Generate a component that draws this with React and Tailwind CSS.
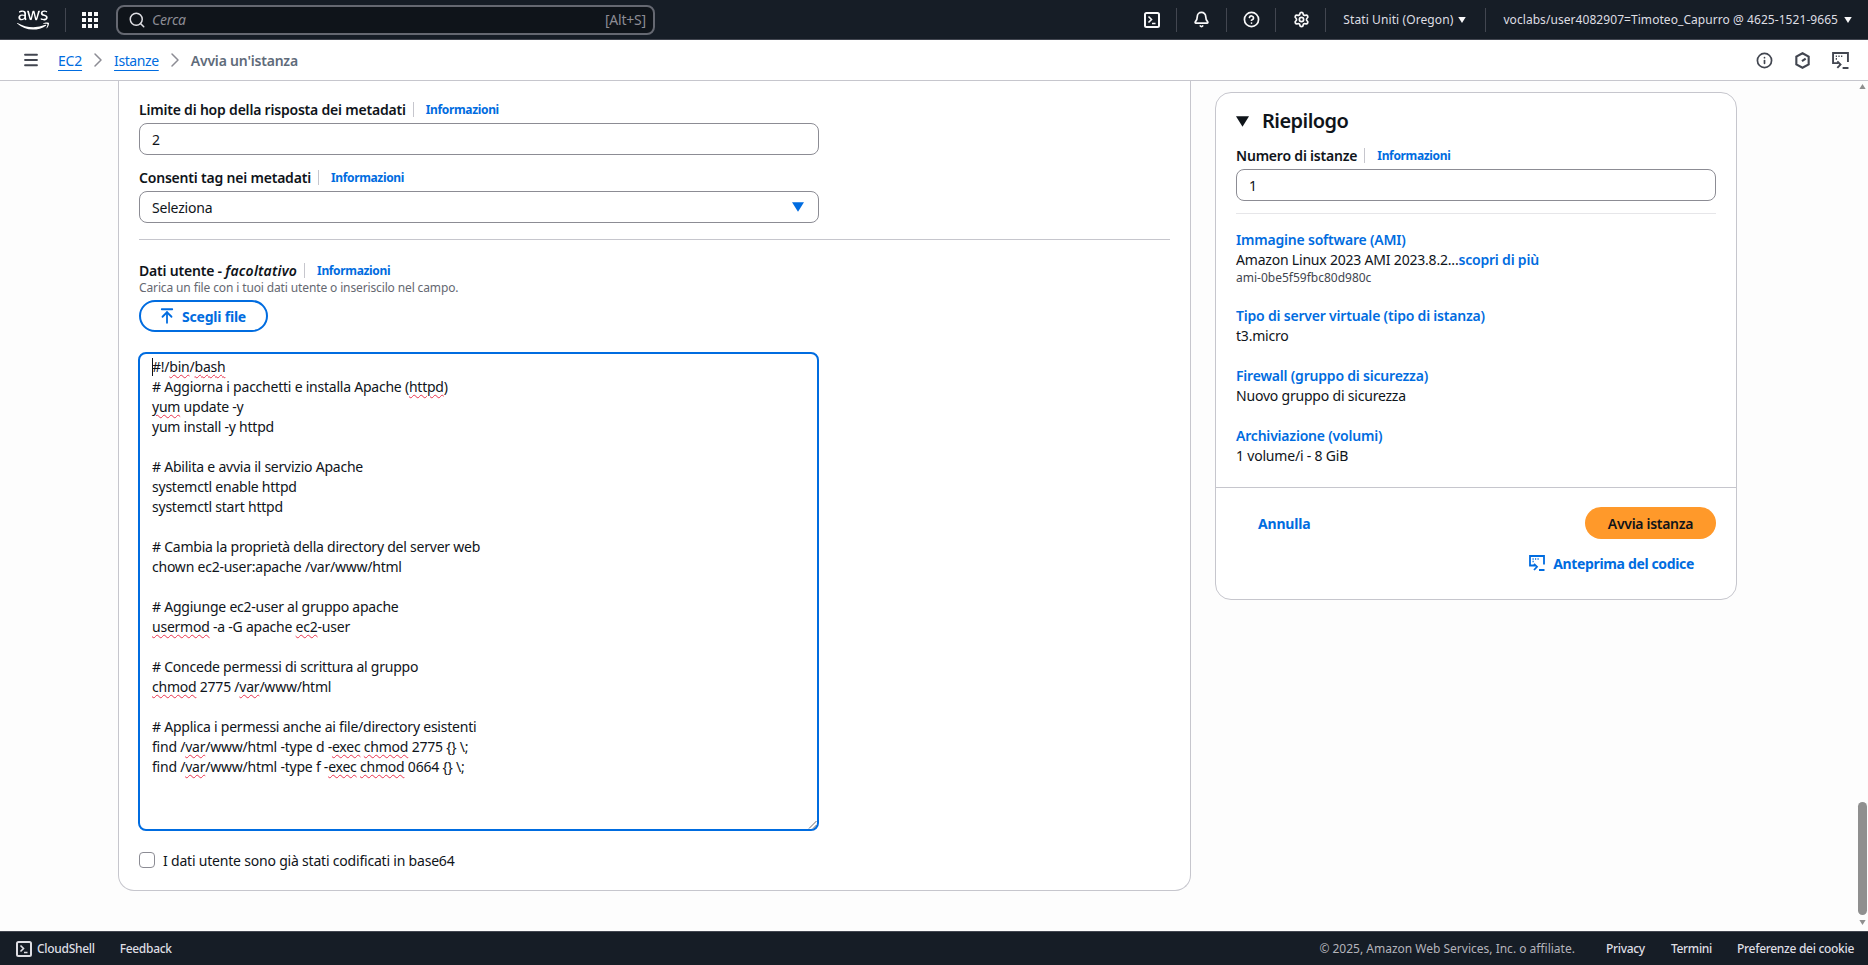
import React from 'react';
import { FaAws } from 'react-icons/fa';
import { Bell, ChevronRight, CircleHelp, Info, Menu, Search, Settings, ArrowUpToLine } from 'lucide-react';

const Shell = ({ className }) => (
  <svg viewBox="0 0 16 16" className={className} fill="none" stroke="currentColor" strokeWidth="2">
    <rect x="1" y="1" width="14" height="14" rx="1.5" />
    <path d="M4.5 4.5 7.5 7.5 4.5 10.5M8 11.5h3.5" strokeWidth="1.6" />
  </svg>
);

const Grid = () => (
  <svg viewBox="0 0 16 16" className="w-4 h-4" fill="currentColor">
    {[0, 6, 12].map((y) => [0, 6, 12].map((x) => <rect key={`${x}-${y}`} x={x} y={y} width="4" height="4" />))}
  </svg>
);

const Caret = ({ className }) => (
  <svg viewBox="0 0 10 8" className={className} fill="currentColor">
    <path d="M0 0h10L5 8z" />
  </svg>
);

const HexClock = () => (
  <svg viewBox="0 0 16 16" className="w-[17px] h-[17px]" fill="none" stroke="currentColor" strokeWidth="2">
    <path d="M8 1.2 13.8 4.4v7.2L8 14.8l-5.8-3.2V4.4z" />
    <path d="M7.5 8.6 11 6.2" />
  </svg>
);

const CodeView = ({ className }) => (
  <svg viewBox="0 0 16 16" className={className} fill="none" stroke="currentColor" strokeWidth="1.8">
    <path d="M6 10.5H1V1h14v8.5" />
    <path d="M3.5 4h1.2M6 4h1.2M8.5 4h1.2M3.5 6.5h1.2" strokeWidth="1.6" />
    <path d="M5 8.8 8 11.8 5 15M10 15h5.5" />
  </svg>
);

const Sq = ({ children }) => (
  <span className="underline decoration-wavy decoration-[#e8344e] decoration-1 underline-offset-2">{children}</span>
);

const InfoLink = () => (
  <span className="ml-[7px] flex items-center h-[15px] border-l border-[#c6c6cd]">
    <span className="pl-[12px] pt-[2px] text-[12px] font-bold tracking-[-0.35px] text-[#006ce0]">Informazioni</span>
  </span>
);

const Label = ({ children }) => (
  <div className="flex items-center h-5 text-[14px] font-semibold text-[#0f141a]">
    {children}
    <InfoLink />
  </div>
);

const Box = ({ children }) => (
  <div className="flex items-center justify-between h-8 px-[12px] bg-white border border-[#8c8c94] rounded-lg text-[14px] text-[#0f141a]">
    {children}
  </div>
);

const Line = ({ children }) => <div className="h-5 whitespace-pre">{children || ' '}</div>;

const SummaryItem = ({ title, children, className }) => (
  <div className={className}>
    <div className="h-5 leading-5 text-[14px] font-semibold text-[#006ce0]">{title}</div>
    <div className="h-5 leading-5 text-[14px] text-[#0f141a]">{children}</div>
  </div>
);

const Divider = () => <div className="w-px h-[24px] bg-[#424650]" />;

export default function App() {
  return (
    <div className="h-screen w-full flex flex-col overflow-hidden bg-[#fdfdfd] font-['Noto_Sans',sans-serif]">
      {/* top nav */}
      <header className="h-10 shrink-0 flex items-center bg-[#161d26] border-b border-[#424650] text-[#f9f9fa]">
        <FaAws className="w-[32px] h-[32px] ml-[17px] text-white" />
        <div className="w-px h-[24px] bg-[#424650] ml-[16px]" />
        <div className="ml-[16px]"><Grid /></div>
        <div className="ml-[18px] w-[539px] h-[30px] flex items-center justify-between pl-[10px] pr-[7px] bg-[#0f141a] border-2 border-[#656871] rounded-lg">
          <div className="flex items-center gap-[6px]">
            <Search className="w-[18px] h-[18px] text-[#dedee3]" strokeWidth={2} />
            <span className="text-[14px] italic tracking-[-0.2px] text-[#8c8c94]">Cerca</span>
          </div>
          <span className="text-[14px] tracking-[-0.2px] text-[#8c8c94]">[Alt+S]</span>
        </div>
        <div className="ml-auto flex items-center text-[12px]">
          <Shell className="w-4 h-4" />
          <div className="ml-[16px]"><Divider /></div>
          <Bell className="w-[17px] h-[17px] ml-[16px]" strokeWidth={2.4} />
          <div className="ml-[16px]"><Divider /></div>
          <CircleHelp className="w-[17px] h-[17px] ml-[16px]" strokeWidth={2.4} />
          <div className="ml-[15px]"><Divider /></div>
          <Settings className="w-[17px] h-[17px] ml-[17px]" strokeWidth={2.4} />
          <div className="ml-[15px]"><Divider /></div>
          <span className="ml-[17px] tracking-[0.1px] text-[#dedee3]">Stati Uniti (Oregon)</span>
          <Caret className="w-[8px] h-[6px] ml-[5px]" />
          <div className="ml-[19px]"><Divider /></div>
          <span className="ml-[17px] tracking-[0.06px] text-[#dedee3]">voclabs/user4082907=Timoteo_Capurro @ 4625-1521-9665</span>
          <Caret className="w-[8px] h-[6px] ml-[6px] mr-[16px]" />
        </div>
      </header>

      {/* breadcrumbs */}
      <div className="h-[41px] shrink-0 flex items-center bg-white border-b border-[#c6c6cd]">
        <Menu className="w-[18px] h-[18px] ml-[22px] text-[#424650]" strokeWidth={2.4} />
        <div className="ml-[18px] flex items-center text-[14px]">
          <span className="text-[#006ce0] tracking-[-0.2px] underline underline-offset-[4px]">EC2</span>
          <ChevronRight className="w-6 h-6 mx-[4px] text-[#8c8c94]" strokeWidth={1.5} />
          <span className="text-[#006ce0] tracking-[-0.4px] underline underline-offset-[4px]">Istanze</span>
          <ChevronRight className="w-6 h-6 mx-[4px] text-[#8c8c94]" strokeWidth={1.5} />
          <span className="font-semibold tracking-[-0.2px] text-[#5f6b7a]">Avvia un'istanza</span>
        </div>
        <div className="ml-auto flex items-center gap-[21px] mr-[19px] text-[#424650]">
          <Info className="w-[17px] h-[17px]" strokeWidth={2.4} />
          <HexClock />
          <CodeView className="w-[17px] h-[17px]" />
        </div>
      </div>

      {/* main */}
      <main className="flex-1 min-h-0 flex tracking-[-0.2px]">
        <div className="flex-1 flex items-start pl-[118px]">
          {/* form panel, scrolled so its top edge is out of view */}
          <section className="w-[1073px] px-[20px] pt-[18px] pb-[20px] bg-white border-x border-b border-[#c6c6cd] rounded-b-2xl">
            <Label>Limite di hop della risposta dei metadati</Label>
            <div className="w-[680px] mt-1"><Box>2</Box></div>
            <div className="mt-3"><Label>Consenti tag nei metadati</Label></div>
            <div className="w-[680px] mt-1">
              <Box>
                Seleziona
                <Caret className="w-[12px] h-[10px] mr-[2px] text-[#006ce0]" />
              </Box>
            </div>
            <div className="h-px bg-[#c6c6cd] mt-[16px] mb-[20px]" />
            <Label>
              <span>Dati utente - <i className="tracking-[0.2px]">facoltativo</i></span>
            </Label>
            <div className="h-4 leading-4 text-[12px] tracking-[-0.13px] text-[#656871]">Carica un file con i tuoi dati utente o inseriscilo nel campo.</div>
            <button className="mt-1 w-[129px] h-8 flex items-center justify-center gap-[6px] pr-[3px] bg-white border-2 border-[#006ce0] rounded-full text-[14px] font-bold text-[#006ce0]">
              <ArrowUpToLine className="w-[18px] h-[18px]" strokeWidth={2.4} />
              Scegli file
            </button>
            <div className="relative w-[681px] h-[479px] -ml-px mt-5 pl-[12px] pt-[3px] bg-white border-2 border-[#006ce0] rounded-lg text-[14px] leading-5 tracking-[-0.23px] text-[#0f141a]">
              <Line><span className="inline-block w-px h-[18px] -mr-px align-[-4px] bg-[#0f141a]" />#!/<Sq>bin</Sq>/<Sq>bash</Sq></Line>
              <Line># Aggiorna i pacchetti e installa Apache (<Sq>httpd</Sq>)</Line>
              <Line><Sq>yum</Sq> update -y</Line>
              <Line>yum install -y httpd</Line>
              <Line />
              <Line># Abilita e avvia il servizio Apache</Line>
              <Line>systemctl enable httpd</Line>
              <Line>systemctl start httpd</Line>
              <Line />
              <Line># Cambia la proprietà della directory del server web</Line>
              <Line>chown ec2-user:apache /var/www/html</Line>
              <Line />
              <Line># Aggiunge ec2-user al gruppo apache</Line>
              <Line><Sq>usermod</Sq> -a -G apache <Sq>ec2</Sq>-user</Line>
              <Line />
              <Line># Concede permessi di scrittura al gruppo</Line>
              <Line><Sq>chmod</Sq> 2775 /<Sq>var</Sq>/www/html</Line>
              <Line />
              <Line># Applica i permessi anche ai file/directory esistenti</Line>
              <Line>find /<Sq>var</Sq>/www/html -type d -<Sq>exec</Sq> <Sq>chmod</Sq> 2775 {'{}'} \;</Line>
              <Line>find /<Sq>var</Sq>/www/html -type f -<Sq>exec</Sq> <Sq>chmod</Sq> 0664 {'{}'} \;</Line>
              <svg viewBox="0 0 10 10" className="absolute right-0 bottom-0 w-[10px] h-[10px] text-[#656871]" stroke="currentColor" strokeWidth="1">
                <path d="M2 9.5 9.5 2M6 9.5 9.5 6" />
              </svg>
            </div>
            <div className="mt-[19px] flex items-center h-5 text-[14px] text-[#0f141a]">
              <span className="w-4 h-4 bg-white border border-[#8c8c94] rounded" />
              <span className="ml-2">I dati utente sono già stati codificati in base64</span>
            </div>
          </section>

          {/* summary panel */}
          <aside className="ml-[24px] mt-[11px] w-[522px] bg-white border border-[#c6c6cd] rounded-2xl">
            <div className="px-[20px] pt-[14px] pb-[21px]">
              <div className="flex items-center h-7">
                <Caret className="w-[13px] h-[11px] text-[#0f141a]" />
                <h2 className="ml-[13px] text-[20px] font-semibold tracking-[-0.55px] text-[#0f141a]">Riepilogo</h2>
              </div>
              <div className="mt-[10px]"><Label>Numero di istanze</Label></div>
              <div className="mt-1"><Box>1</Box></div>
              <div className="h-px mt-3 bg-[#e6e6e9]" />
              <SummaryItem title="Immagine software (AMI)" className="mt-4">
                Amazon Linux 2023 AMI 2023.8.2...<span className="font-semibold text-[#006ce0]">scopri di più</span>
              </SummaryItem>
              <div className="h-4 leading-4 text-[12px] tracking-normal text-[#424650]">ami-0be5f59fbc80d980c</div>
              <SummaryItem title="Tipo di server virtuale (tipo di istanza)" className="mt-5">t3.micro</SummaryItem>
              <SummaryItem title="Firewall (gruppo di sicurezza)" className="mt-5">Nuovo gruppo di sicurezza</SummaryItem>
              <SummaryItem title="Archiviazione (volumi)" className="mt-5">1 volume/i - 8 GiB</SummaryItem>
            </div>
            <div className="px-[20px] pt-[19px] pb-[26px] border-t border-[#c6c6cd]">
              <div className="flex items-center justify-between">
                <span className="ml-[22px] text-[14px] font-bold text-[#006ce0]">Annulla</span>
                <button className="w-[131px] h-8 bg-[#ff992a] rounded-full text-[14px] font-semibold tracking-[-0.3px] text-[#0f141a]">Avvia istanza</button>
              </div>
              <div className="mt-[14px] mr-[22px] h-5 flex items-center justify-end gap-[8px] text-[14px] font-bold tracking-[-0.35px] text-[#006ce0]">
                <CodeView className="w-4 h-4" />
                Anteprima del codice
              </div>
            </div>
          </aside>
        </div>

        {/* page scrollbar */}
        <div className="w-[10px] shrink-0 flex flex-col justify-between pt-[3px] pb-[6px] text-[#8f8f8f]">
          <Caret className="w-[9px] h-[5px] rotate-180" />
          <div>
            <div className="w-[9px] h-[113px] rounded-full bg-[#8f8f8f]" />
            <Caret className="mt-[5px] w-[9px] h-[5px]" />
          </div>
        </div>
      </main>

      {/* footer */}
      <footer className="h-[34px] shrink-0 flex items-center bg-[#161d26] border-t border-[#424650] text-[12px] font-medium tracking-[-0.3px] text-[#dedee3]">
        <Shell className="w-4 h-4 ml-[16px]" />
        <span className="ml-[5px]">CloudShell</span>
        <span className="ml-[25px]">Feedback</span>
        <span className="ml-auto font-normal tracking-normal text-[#b4b4bb]">© 2025, Amazon Web Services, Inc. o affiliate.</span>
        <span className="ml-[31px]">Privacy</span>
        <span className="ml-[26px]">Termini</span>
        <span className="ml-[25px] mr-[14px]">Preferenze dei cookie</span>
      </footer>
    </div>
  );
}
